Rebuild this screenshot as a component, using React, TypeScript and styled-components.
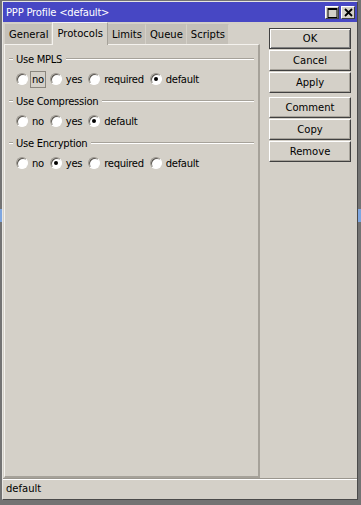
import React from 'react'
import styled, { createGlobalStyle } from 'styled-components'

const GlobalStyle = createGlobalStyle`
  html, body {
    margin: 0;
    padding: 0;
    background: #737373;
  }
  body {
    font-family: "DejaVu Sans", Verdana, sans-serif;
    font-size: 10px;
  }
`

type RadioOption = { label: string; checked?: boolean; focused?: boolean }
type Group = { title: string; options: RadioOption[] }

const groups: Group[] = [
  {
    title: 'Use MPLS',
    options: [
      { label: 'no', focused: true },
      { label: 'yes' },
      { label: 'required' },
      { label: 'default', checked: true },
    ],
  },
  {
    title: 'Use Compression',
    options: [{ label: 'no' }, { label: 'yes' }, { label: 'default', checked: true }],
  },
  {
    title: 'Use Encryption',
    options: [
      { label: 'no' },
      { label: 'yes', checked: true },
      { label: 'required' },
      { label: 'default' },
    ],
  },
]

const tabs = ['General', 'Protocols', 'Limits', 'Queue', 'Scripts']
const buttons = ['OK', 'Cancel', 'Apply', 'Comment', 'Copy', 'Remove']

const App = () => (
  <>
    <GlobalStyle />
    <Desktop>
      <Window>
        <TitleBar>
          <TitleText>PPP Profile &lt;default&gt;</TitleText>
          <TitleButtons>
            <TitleButton>
              <svg width="11" height="10" viewBox="0 0 11 10">
                <rect x="1" y="0.5" width="9" height="9" fill="none" stroke="#000" />
                <line x1="1" y1="1.5" x2="10" y2="1.5" stroke="#000" />
              </svg>
            </TitleButton>
            <TitleButton>
              <svg width="9" height="9" viewBox="0 0 9 9">
                <path d="M1 1 L8 8 M8 1 L1 8" stroke="#000" strokeWidth="1.8" />
              </svg>
            </TitleButton>
          </TitleButtons>
        </TitleBar>

        <Body>
          <LeftPane>
            <TabStrip>
              {tabs.map((t) => (
                <Tab key={t} active={t === 'Protocols'}>
                  {t}
                </Tab>
              ))}
            </TabStrip>
            <Panel>
              {groups.map((g) => (
                <GroupBox key={g.title}>
                  <GroupHeader>
                    <Dash />
                    <GroupTitle>{g.title}</GroupTitle>
                    <Rule />
                  </GroupHeader>
                  <RadioRow>
                    {g.options.map((o) => (
                      <RadioItem key={o.label}>
                        <RadioCircle checked={o.checked} />
                        <RadioLabel focused={o.focused}>{o.label}</RadioLabel>
                      </RadioItem>
                    ))}
                  </RadioRow>
                </GroupBox>
              ))}
            </Panel>
          </LeftPane>

          <ButtonColumn>
            {buttons.map((b, i) => (
              <Button key={b} primary={i === 0} spaced={b === 'Comment'}>
                {b}
              </Button>
            ))}
          </ButtonColumn>
        </Body>

        <StatusBar>default</StatusBar>
      </Window>
    </Desktop>
  </>
)

const Desktop = styled.div`
  width: 361px;
  height: 505px;
  box-sizing: border-box;
  padding: 1px 3px 5px 2px;
  background:
    linear-gradient(#7ea6e0, #7ea6e0) left 0 top 209px / 2px 13px no-repeat,
    linear-gradient(#7ea6e0, #7ea6e0) right 0 top 209px / 3px 13px no-repeat,
    #737373;
`

const Window = styled.div`
  height: 100%;
  box-sizing: border-box;
  border: 1px solid #e8e6e1;
  border-right-color: #4a4a4a;
  border-bottom-color: #4a4a4a;
  background: #d4d0c8;
  display: flex;
  flex-direction: column;
  color: #000;
`

const TitleBar = styled.div`
  height: 20px;
  flex-shrink: 0;
  background: #4747c4;
  display: flex;
  align-items: center;
  justify-content: space-between;
  padding: 0 2px 0 3px;
`

const TitleText = styled.span`
  color: #fff;
  font-size: 10px;
  letter-spacing: -0.2px;
`

const TitleButtons = styled.div`
  display: flex;
  gap: 2px;
  margin-top: 1px;
`

const TitleButton = styled.div`
  width: 14px;
  height: 13px;
  box-sizing: border-box;
  background: #d4d0c8;
  border: 1px solid #fff;
  border-right-color: #404040;
  border-bottom-color: #404040;
  display: flex;
  align-items: center;
  justify-content: center;
`

const Body = styled.div`
  flex: 1;
  display: flex;
  min-height: 0;
`

const LeftPane = styled.div`
  width: 256px;
  display: flex;
  flex-direction: column;
  padding-left: 1px;
`

const TabStrip = styled.div`
  display: flex;
  align-items: flex-end;
  height: 22px;
  padding-left: 1px;
`

const Tab = styled.div<{ active?: boolean }>`
  height: ${({ active }) => (active ? '23px' : '20px')};
  box-sizing: border-box;
  padding: ${({ active }) => (active ? '0 4px 2px' : '0 3px 0')};
  margin-bottom: ${({ active }) => (active ? '-1px' : '0')};
  display: flex;
  align-items: center;
  background: ${({ active }) => (active ? '#d4d0c8' : '#c4c0b8')};
  border-top: 1px solid ${({ active }) => (active ? '#f4f2ee' : '#c4c0b8')};
  border-left: 1px solid ${({ active }) => (active ? '#f4f2ee' : '#c4c0b8')};
  border-right: 1px solid ${({ active }) => (active ? '#a6a29a' : '#d4d0c8')};
  position: relative;
  z-index: ${({ active }) => (active ? 1 : 0)};
  font-size: 10px;
  white-space: nowrap;
`

const Panel = styled.div`
  flex: 1;
  border: 1px solid #f4f2ee;
  border-right: 2px solid #a6a29a;
  border-bottom: 2px solid #a6a29a;
  padding: 6px 4px 0 1px;
`

const GroupBox = styled.div`
  margin-bottom: 5px;
`

const GroupHeader = styled.div`
  display: flex;
  align-items: center;
  height: 16px;
`

const Dash = styled.div`
  width: 4px;
  height: 0;
  border-top: 1px solid #a6a29a;
  border-bottom: 1px solid #fff;
  margin-left: 3px;
`

const GroupTitle = styled.span`
  padding: 0 4px 0 3px;
  font-size: 10px;
  letter-spacing: -0.3px;
`

const Rule = styled.div`
  flex: 1;
  height: 0;
  border-top: 1px solid #a6a29a;
  border-bottom: 1px solid #fff;
`

const RadioRow = styled.div`
  display: flex;
  align-items: center;
  gap: 4px;
  height: 18px;
  margin-top: 3px;
  padding-left: 10px;
`

const RadioItem = styled.div`
  display: flex;
  align-items: center;
  gap: 2px;
`

const RadioCircle = styled.span<{ checked?: boolean }>`
  width: 12px;
  height: 12px;
  box-sizing: border-box;
  border-radius: 50%;
  background: #fff;
  border: 1px solid #9a968e;
  border-right-color: #fff;
  border-bottom-color: #fff;
  box-shadow: inset 1px 1px 0 #5a5650;
  display: flex;
  align-items: center;
  justify-content: center;
  &::after {
    content: '';
    display: ${({ checked }) => (checked ? 'block' : 'none')};
    width: 4px;
    height: 4px;
    border-radius: 50%;
    background: #000;
  }
`

const RadioLabel = styled.span<{ focused?: boolean }>`
  font-size: 10px;
  letter-spacing: -0.3px;
  padding: 2px 1px;
  border: 1px solid ${({ focused }) => (focused ? '#8a867e' : 'transparent')};
`

const ButtonColumn = styled.div`
  flex: 1;
  display: flex;
  flex-direction: column;
  gap: 1px;
  padding: 6px 0 0 9px;
`

const Button = styled.div<{ primary?: boolean; spaced?: boolean }>`
  width: 82px;
  height: 21px;
  box-sizing: border-box;
  margin-top: ${({ spaced }) => (spaced ? '3px' : '0')};
  display: flex;
  align-items: center;
  justify-content: center;
  font-size: 10px;
  background: #d4d0c8;
  border: 1px solid ${({ primary }) => (primary ? '#404040' : '#fff')};
  border-right-color: #404040;
  border-bottom-color: #404040;
  box-shadow: ${({ primary }) =>
    primary ? 'inset 1px 1px 0 #fff, inset -1px -1px 0 #808080' : 'inset -1px -1px 0 #a6a29a'};
`

const StatusBar = styled.div`
  height: 19px;
  flex-shrink: 0;
  display: flex;
  align-items: center;
  padding-left: 3px;
  border-top: 1px solid #9a968e;
  box-shadow: inset 0 1px 0 #fff;
  font-size: 10px;
  margin-bottom: 1px;
`

export default App
